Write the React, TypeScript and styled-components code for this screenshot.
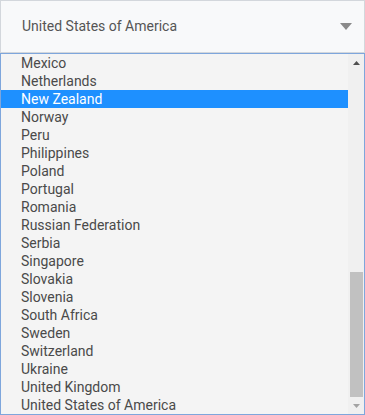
import React from 'react';
import styled, { createGlobalStyle } from 'styled-components';

const GlobalStyle = createGlobalStyle`
  html, body {
    margin: 0;
    padding: 0;
    background: #ffffff;
  }
  body {
    font-family: Roboto, "Liberation Sans", sans-serif;
  }
`;

const countries = [
  'Mexico',
  'Netherlands',
  'New Zealand',
  'Norway',
  'Peru',
  'Philippines',
  'Poland',
  'Portugal',
  'Romania',
  'Russian Federation',
  'Serbia',
  'Singapore',
  'Slovakia',
  'Slovenia',
  'South Africa',
  'Sweden',
  'Switzerland',
  'Ukraine',
  'United Kingdom',
  'United States of America',
];

const Wrapper = styled.div`
  width: 365px;
  height: 415px;
  display: flex;
  flex-direction: column;
  box-sizing: border-box;
`;

const SelectBox = styled.div`
  height: 53px;
  box-sizing: border-box;
  display: flex;
  align-items: center;
  justify-content: space-between;
  padding: 0 12px 1px 21px;
  background: #f8f9fa;
  border: 1px solid #d3d7dc;
  color: #555;
  font-size: 14px;
`;

const ListBox = styled.div`
  flex: 1;
  display: flex;
  box-sizing: border-box;
  border: 1px solid #7ea6dc;
  background: #f4f4f4;
  overflow: hidden;
`;

const Options = styled.ul`
  flex: 1;
  list-style: none;
  margin: 0;
  padding: 0;
`;

const Option = styled.li<{ $selected?: boolean }>`
  height: 18px;
  line-height: 18px;
  padding-left: 20px;
  font-size: 14px;
  color: ${(p) => (p.$selected ? '#ffffff' : '#4a4a4a')};
  background: ${(p) => (p.$selected ? '#1e90ff' : 'transparent')};
  white-space: nowrap;
`;

const Scrollbar = styled.div`
  width: 16px;
  display: flex;
  flex-direction: column;
  align-items: center;
  background: #f0f0f0;
`;

const ArrowButton = styled.div`
  height: 17px;
  display: flex;
  align-items: center;
  justify-content: center;
`;

const Track = styled.div`
  flex: 1;
  display: flex;
  flex-direction: column;
  justify-content: flex-end;
  width: 100%;
  align-items: center;
`;

const Thumb = styled.div`
  width: 13px;
  height: 125px;
  background: #c1c1c1;
`;

const Caret = ({ color, up, w, h }: { color: string; up?: boolean; w: number; h: number }) => (
  <svg width={w} height={h} viewBox={`0 0 ${w} ${h}`}>
    {up ? (
      <polygon points={`0,${h} ${w},${h} ${w / 2},0`} fill={color} />
    ) : (
      <polygon points={`0,0 ${w},0 ${w / 2},${h}`} fill={color} />
    )}
  </svg>
);

const App: React.FC = () => {
  return (
    <>
      <GlobalStyle />
      <Wrapper>
        <SelectBox>
          <span>United States of America</span>
          <Caret color="#8a8a8a" w={12} h={7} />
        </SelectBox>
        <ListBox>
          <Options>
            {countries.map((c) => (
              <Option key={c} $selected={c === 'New Zealand'}>
                {c}
              </Option>
            ))}
          </Options>
          <Scrollbar>
            <ArrowButton>
              <Caret color="#505050" up w={7} h={4} />
            </ArrowButton>
            <Track>
              <Thumb />
            </Track>
            <ArrowButton>
              <Caret color="#a3a3a3" w={7} h={4} />
            </ArrowButton>
          </Scrollbar>
        </ListBox>
      </Wrapper>
    </>
  );
};

export default App;
